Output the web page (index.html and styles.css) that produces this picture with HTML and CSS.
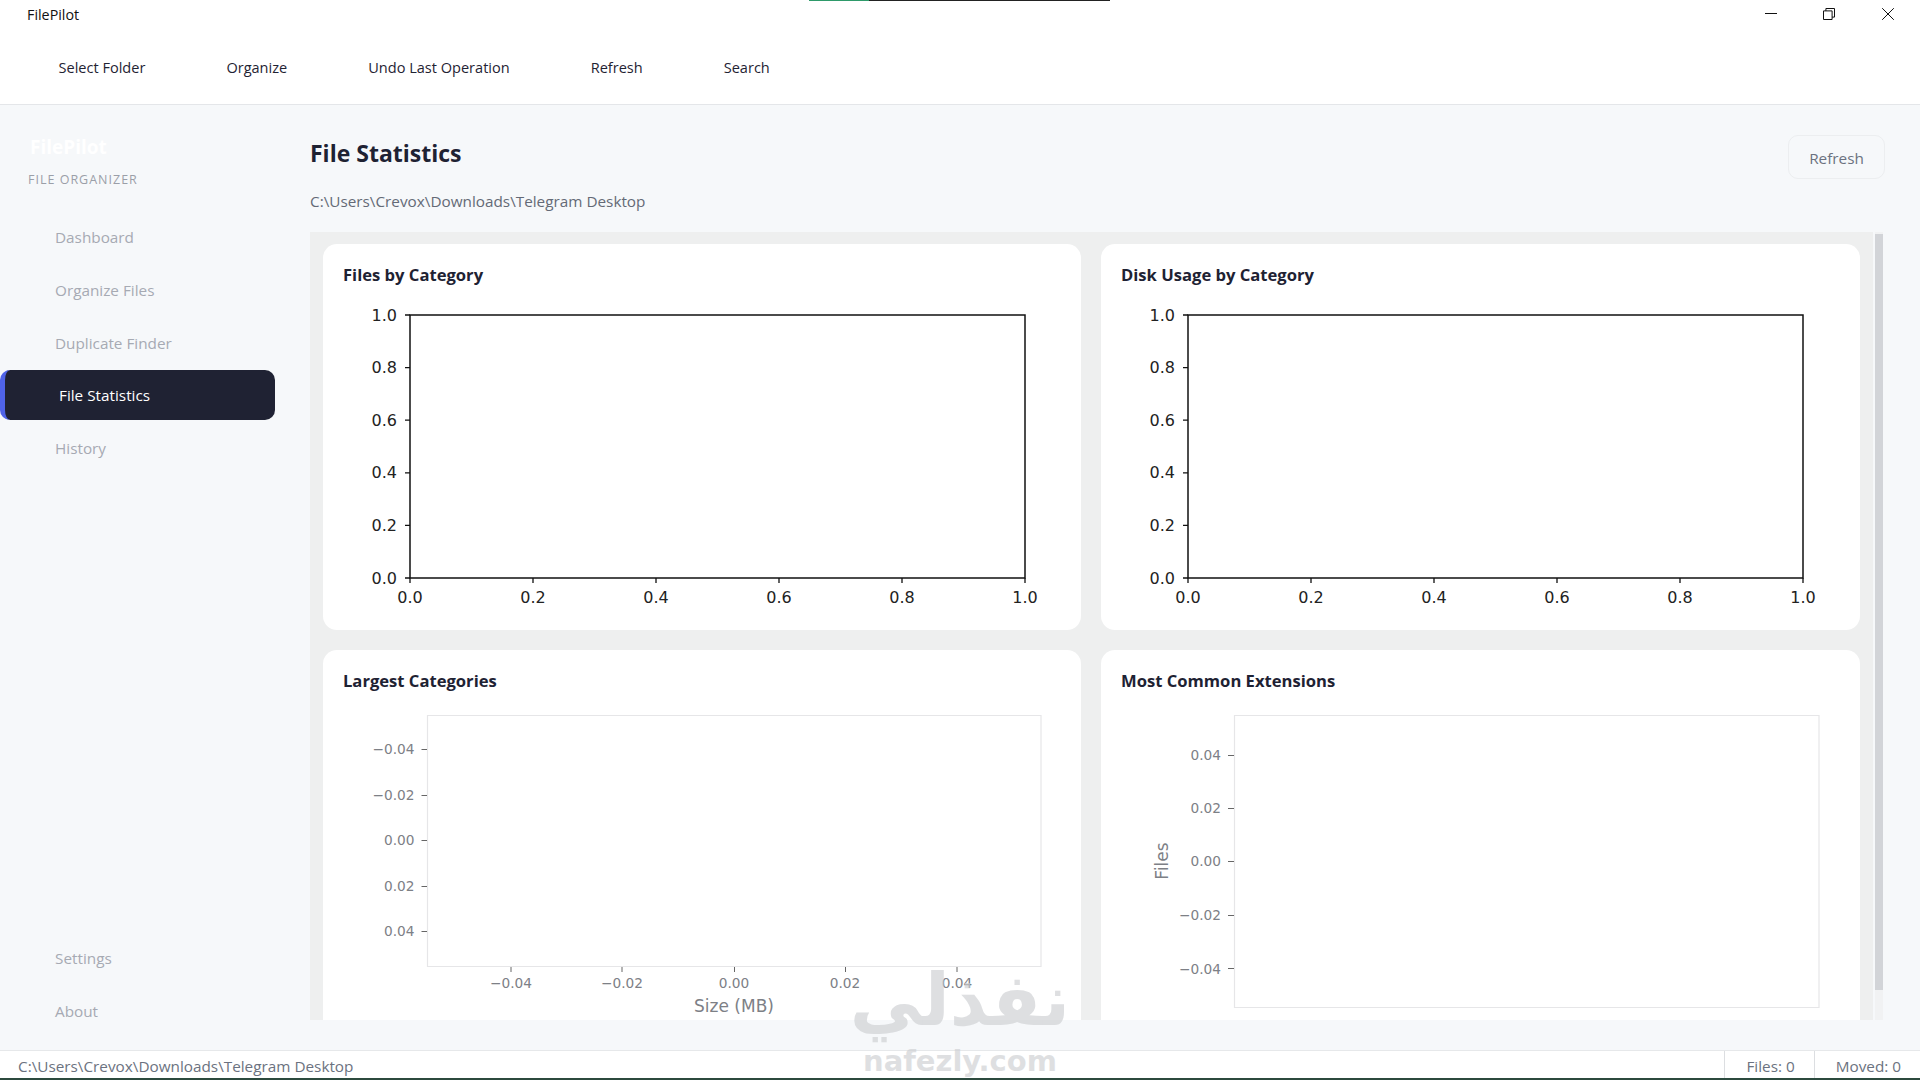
FILE: index.html
```html
<!DOCTYPE html>
<html>
    <head>
        <title>FilePilot</title>
        <link rel="stylesheet" href="styles.css">
    </head>
    <body>
        <div class="topLine"><div class="topLineDone"></div></div>

        <div id="header">
            <div class="titleBar">
                <div class="appName">FilePilot</div>
                <div class="winControls">
                    <svg class="winIcon" viewBox="0 0 12 12"><path d="M0 5.5H12"/></svg>
                    <svg class="winIcon" viewBox="0 0 12 12"><path d="M.5 2.9H9.1V11.5H.5Z M2.9 2.9V.5H11.5V9.1H9.1"/></svg>
                    <svg class="winIcon" viewBox="0 0 12 12"><path d="M.2 .2L11.8 11.8M11.8 .2L.2 11.8"/></svg>
                </div>
            </div>
            <div class="toolbar">
                <div>Select Folder</div>
                <div>Organize</div>
                <div>Undo Last Operation</div>
                <div>Refresh</div>
                <div>Search</div>
            </div>
        </div>

        <div id="body">
            <div id="sidebar">
                <div class="logo">FilePilot</div>
                <div class="logoSub">FILE ORGANIZER</div>
                <div class="nav">
                    <div class="navItem">Dashboard</div>
                    <div class="navItem">Organize Files</div>
                    <div class="navItem">Duplicate Finder</div>
                    <div class="navItem active">File Statistics</div>
                    <div class="navItem">History</div>
                </div>
                <div class="nav navBottom">
                    <div class="navItem">Settings</div>
                    <div class="navItem">About</div>
                </div>
            </div>

            <div id="main">
                <div class="pageHead">
                    <div class="pageTitle">File Statistics</div>
                    <div class="refreshBtn">Refresh</div>
                </div>
                <div class="pagePath">C:\Users\Crevox\Downloads\Telegram Desktop</div>

                <div class="scrollRow">
                    <div class="scroller">
                        <div class="cardGrid">
                            <div class="card">
                                <div class="cardTitle">Files by Category</div>
                                <svg class="chart" viewBox="0 0 718 320">
                                    <path class="frameDark" d="M67 19H682V282H67Z"/>
                                    <path class="tickDark" d="M62 19H67M62 71.6H67M62 124.2H67M62 176.8H67M62 229.4H67M62 282H67M67 282V287M190 282V287M313 282V287M436 282V287M559 282V287M682 282V287"/>
                                    <g class="labelDark" text-anchor="end">
                                        <text x="54" y="25">1.0</text>
                                        <text x="54" y="77">0.8</text>
                                        <text x="54" y="130">0.6</text>
                                        <text x="54" y="182">0.4</text>
                                        <text x="54" y="235">0.2</text>
                                        <text x="54" y="288">0.0</text>
                                    </g>
                                    <g class="labelDark" text-anchor="middle">
                                        <text x="67" y="307">0.0</text>
                                        <text x="190" y="307">0.2</text>
                                        <text x="313" y="307">0.4</text>
                                        <text x="436" y="307">0.6</text>
                                        <text x="559" y="307">0.8</text>
                                        <text x="682" y="307">1.0</text>
                                    </g>
                                </svg>
                            </div>
                            <div class="card">
                                <div class="cardTitle">Disk Usage by Category</div>
                                <svg class="chart" viewBox="0 0 718 320">
                                    <path class="frameDark" d="M67 19H682V282H67Z"/>
                                    <path class="tickDark" d="M62 19H67M62 71.6H67M62 124.2H67M62 176.8H67M62 229.4H67M62 282H67M67 282V287M190 282V287M313 282V287M436 282V287M559 282V287M682 282V287"/>
                                    <g class="labelDark" text-anchor="end">
                                        <text x="54" y="25">1.0</text>
                                        <text x="54" y="77">0.8</text>
                                        <text x="54" y="130">0.6</text>
                                        <text x="54" y="182">0.4</text>
                                        <text x="54" y="235">0.2</text>
                                        <text x="54" y="288">0.0</text>
                                    </g>
                                    <g class="labelDark" text-anchor="middle">
                                        <text x="67" y="307">0.0</text>
                                        <text x="190" y="307">0.2</text>
                                        <text x="313" y="307">0.4</text>
                                        <text x="436" y="307">0.6</text>
                                        <text x="559" y="307">0.8</text>
                                        <text x="682" y="307">1.0</text>
                                    </g>
                                </svg>
                            </div>
                            <div class="card">
                                <div class="cardTitle">Largest Categories</div>
                                <svg class="chart" viewBox="0 0 718 320">
                                    <path class="frameLight" d="M84.500 13.500H698V264.500H84.500Z"/>
                                    <path class="tickLight" d="M78.500 47.500H84M78.500 93.500H84M78.500 138.500H84M78.500 184.500H84M78.500 229.500H84M168 265V270M279 265V270M391.500 265V270M502.500 265V270M614 265V270"/>
                                    <g class="labelLight" text-anchor="end">
                                        <text x="71.500" y="52">−0.04</text>
                                        <text x="71.500" y="98">−0.02</text>
                                        <text x="71.500" y="143">0.00</text>
                                        <text x="71.500" y="189">0.02</text>
                                        <text x="71.500" y="234">0.04</text>
                                    </g>
                                    <g class="labelLight" text-anchor="middle">
                                        <text x="168" y="286">−0.04</text>
                                        <text x="279" y="286">−0.02</text>
                                        <text x="391" y="286">0.00</text>
                                        <text x="502" y="286">0.02</text>
                                        <text x="614" y="286">0.04</text>
                                        <text class="axisName" x="391" y="310">Size (MB)</text>
                                    </g>
                                </svg>
                            </div>
                            <div class="card">
                                <div class="cardTitle">Most Common Extensions</div>
                                <svg class="chart" viewBox="0 0 718 320">
                                    <path class="frameLight" d="M113.500 13.500H698V305.500H113.500Z"/>
                                    <path class="tickLight" d="M107 53.500H113M107 106.500H113M107 159.500H113M107 213.500H113M107 266.500H113"/>
                                    <g class="labelLight" text-anchor="end">
                                        <text x="100" y="58">0.04</text>
                                        <text x="100" y="111">0.02</text>
                                        <text x="100" y="164">0.00</text>
                                        <text x="100" y="218">−0.02</text>
                                        <text x="100" y="272">−0.04</text>
                                    </g>
                                    <text class="labelLight axisName" text-anchor="middle" transform="translate(47 159) rotate(-90)">Files</text>
                                </svg>
                            </div>
                        </div>
                    </div>
                    <div class="scrollTrack"><div class="scrollThumb"></div></div>
                </div>
            </div>
        </div>

        <div id="statusBar">
            <div class="statusPath">C:\Users\Crevox\Downloads\Telegram Desktop</div>
            <div class="statusCell">Files: 0</div>
            <div class="statusCell">Moved: 0</div>
        </div>
        <div class="bottomStrip"></div>

        <div class="watermark">
            <div class="wmArabic" lang="ar" dir="rtl">نفذلي</div>
            <div class="wmLatin">nafezly.com</div>
        </div>
    </body>
</html>
```

FILE: styles.css
```css
*{
    padding: 0;
    margin: 0;
    box-sizing: border-box;
}
body {
    width: 1920px;
    height: 1080px;
    display: flex;
    flex-direction: column;
    overflow: hidden;
    background-color: #f6f8fa;
    font-family: "Open Sans", "Liberation Sans", sans-serif;
    color: #1f2333;
}

/* capture artefact along the top edge */
.topLine{
    position: absolute;
    left: 809px;
    top: 0;
    width: 301px;
    height: 1px;
    background-color: #222222;
}
.topLineDone{
    width: 60px;
    height: 1px;
    background-color: #2e9a6a;
}

#header{
    height: 105px;
    flex: none;
    background-color: white;
    border-bottom: 1px solid #e4e6e9;
}
.titleBar{
    height: 28px;
    display: flex;
    align-items: center;
    justify-content: space-between;
    padding-left: 27px;
    padding-right: 26px;
}
.appName{
    font-size: 14.300px;
    color: #111111;
}
.winControls{
    display: flex;
    gap: 46px;
}
.winIcon{
    width: 12px;
    height: 12px;
    fill: none;
    stroke: #111111;
    stroke-width: 1;
}
.winIcon:last-child{
    margin-left: 1px;
}
.toolbar{
    height: 76px;
    display: flex;
    align-items: center;
    gap: 81px;
    padding-left: 58.500px;
    padding-top: 1px;
    font-size: 14.550px;
}

#body{
    flex: 1;
    display: flex;
    min-height: 0;
}

#sidebar{
    width: 310px;
    flex: none;
    display: flex;
    flex-direction: column;
    padding-top: 27px;
    padding-bottom: 14px;
}
.logo{
    height: 30px;
    line-height: 30px;
    padding-left: 30px;
    font-size: 19px;
    font-weight: 700;
    color: white;
}
.logoSub{
    height: 16px;
    line-height: 16px;
    margin-top: 10px;
    padding-left: 28px;
    font-size: 12.500px;
    letter-spacing: 1px;
    color: #9b9fa8;
}
.nav{
    margin-top: 24px;
    display: flex;
    flex-direction: column;
    gap: 2.750px;
}
.navBottom{
    margin-top: auto;
}
.navItem{
    width: 275px;
    height: 50px;
    line-height: 50px;
    padding-left: 55px;
    font-size: 15.300px;
    color: #a6aab3;
}
.navItem.active{
    padding-left: 54px;
    border-left: 5px solid #4f63e8;
    border-radius: 10px;
    background-color: #1f2233;
    color: white;
    font-weight: 500;
}

#main{
    flex: 1;
    min-width: 0;
    display: flex;
    flex-direction: column;
    padding-top: 30px;
    padding-right: 35px;
    padding-bottom: 30px;
}
.pageHead{
    display: flex;
    justify-content: space-between;
    align-items: flex-start;
}
.pageTitle{
    line-height: 36px;
    font-size: 23px;
    font-weight: 700;
    color: #1e2233;
}
.refreshBtn{
    width: 97px;
    height: 44px;
    line-height: 44px;
    text-align: center;
    font-size: 15.300px;
    color: #6b7280;
    border: 1px solid #eceef0;
    border-radius: 10px;
}
.pagePath{
    line-height: 22px;
    margin-top: 11px;
    font-size: 15.300px;
    color: #646a76;
}

.scrollRow{
    flex: 1;
    min-height: 0;
    display: flex;
    gap: 2px;
    margin-top: 20px;
    margin-right: 2px;
}
.scroller{
    flex: 1;
    min-width: 0;
    overflow: hidden;
    background-color: #eeefef;
    padding: 12px 13px;
}
.scrollTrack{
    width: 8px;
    flex: none;
    padding-top: 2px;
    background-color: #f1f2f3;
}
.scrollThumb{
    height: 756px;
    background-color: #d2d4d8;
}
.cardGrid{
    display: grid;
    grid-template-columns: 758px 759px;
    gap: 20px;
}
.card{
    height: 386px;
    background-color: white;
    border-radius: 14px;
    padding: 20px;
    overflow: hidden;
}
.cardTitle{
    height: 22px;
    line-height: 22px;
    font-size: 16.600px;
    font-weight: 700;
    color: #1e2233;
}
.chart{
    display: block;
    width: 718px;
    height: 320px;
    margin-top: 10px;
    font-family: "DejaVu Sans", sans-serif;
}
.frameDark{
    fill: none;
    stroke: #111111;
    stroke-width: 1.500;
}
.tickDark{
    fill: none;
    stroke: #111111;
    stroke-width: 1.300;
}
.labelDark{
    font-size: 16px;
    fill: #222222;
}
.frameLight{
    fill: none;
    stroke: #e6e6e8;
    stroke-width: 1.200;
}
.tickLight{
    fill: none;
    stroke: #666666;
    stroke-width: 1;
}
.labelLight{
    font-size: 13.700px;
    fill: #7d8086;
}
.axisName{
    font-size: 17px;
}

#statusBar{
    height: 28px;
    flex: none;
    display: flex;
    align-items: stretch;
    background-color: white;
    border-top: 1px solid #e6e8ea;
    font-size: 15.300px;
    line-height: 30px;
    color: #6b7280;
}
.statusPath{
    flex: 1;
    padding-left: 18px;
}
.statusCell{
    padding-left: 21px;
    padding-right: 19px;
    border-left: 1px solid #dcdee1;
}
.bottomStrip{
    height: 2px;
    flex: none;
    background-color: #2c4a3e;
}

.watermark{
    position: absolute;
    left: 840px;
    top: 955px;
    width: 240px;
    text-align: center;
    color: #cdcfd2;
    opacity: 0.65;
    font-family: "DejaVu Sans", sans-serif;
    font-weight: 700;
}
.wmArabic{
    font-size: 72px;
    line-height: 90px;
}
.wmLatin{
    margin-top: -2px;
    font-size: 29px;
    line-height: 36px;
}
```
